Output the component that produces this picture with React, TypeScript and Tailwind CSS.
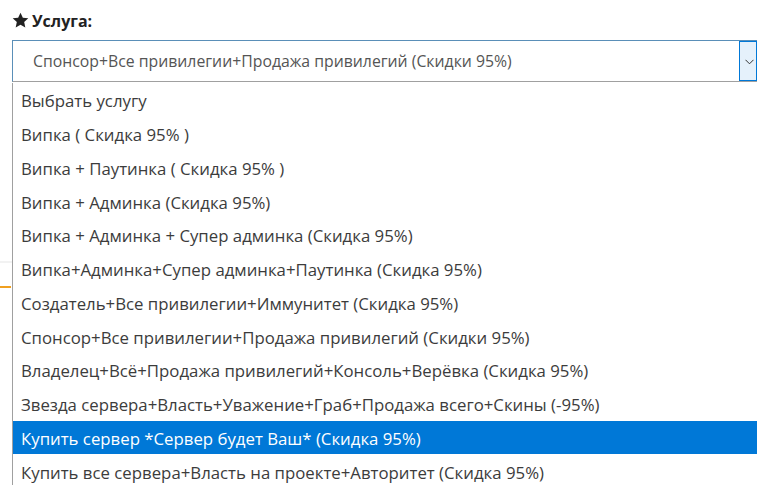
import React from "react";

const items = [
  "Выбрать услугу",
  "Випка ( Скидка 95% )",
  "Випка + Паутинка ( Скидка 95% )",
  "Випка + Админка (Скидка 95%)",
  "Випка + Админка + Супер админка (Скидка 95%)",
  "Випка+Админка+Супер админка+Паутинка (Скидка 95%)",
  "Создатель+Все привилегии+Иммунитет (Скидка 95%)",
  "Спонсор+Все привилегии+Продажа привилегий (Скидки 95%)",
  "Владелец+Всё+Продажа привилегий+Консоль+Верёвка (Скидка 95%)",
  "Звезда сервера+Власть+Уважение+Граб+Продажа всего+Скины (-95%)",
  "Купить сервер *Сервер будет Ваш* (Скидка 95%)",
  "Купить все сервера+Власть на проекте+Авторитет (Скидка 95%)",
];

export default function App() {
  return (
    <div className="w-[757px] h-[485px] overflow-hidden bg-white font-['Open_Sans',sans-serif] text-[#444] flex flex-col">
      <div className="flex items-center gap-[3px] pl-[12px] pt-[12px] h-[30px] text-[16px] font-bold text-[#222] leading-none">
        <svg width="17" height="17" viewBox="0 0 24 24" className="fill-[#222]">
          <path d="M12 1l3.3 7 7.7.9-5.8 5.3 1.6 7.6L12 17.9l-6.8 3.9 1.6-7.6L1 8.9l7.7-.9z" />
        </svg>
        <span>Услуга:</span>
      </div>
      <div className="ml-[12px] mt-[11px] h-[42px] shrink-0 flex border-t border-l border-[#5a8fb8] border-b border-b-[#a0a0a0]">
        <div className="flex-1 flex items-center pl-[20px] pt-[1px] text-[15.8px] text-[#555] whitespace-nowrap">
          Спонсор+Все привилегии+Продажа привилегий (Скидки 95%)
        </div>
        <div className="w-[18px] h-full bg-[#e5f1fb] border border-[#0078d7] flex items-center pl-[5px] pt-[2px]">
          <svg width="9" height="6" viewBox="0 0 9 6">
            <path d="M0.5 0.8 L4.5 4.8 L8.5 0.8" fill="none" stroke="#333" strokeWidth="1" />
          </svg>
        </div>
      </div>
      <div className="flex flex-1 pt-[1px]">
        <div className="w-[12px] shrink-0 flex flex-col pt-[178px] gap-[23px]">
          <div className="h-[2px] w-[12px] bg-[#f2f2f2]" />
          <div className="h-[2px] w-[11px] bg-[#f0a020]" />
        </div>
        <ul className="flex-1 bg-white border-l border-[#a0a0a0]">
          {items.map((t, i) => (
            <li
              key={i}
              className={
                i === 10
                  ? "h-[33.75px] flex items-center pl-[8px] pt-[2px] text-[16.8px] bg-[#0078d7] text-white whitespace-nowrap"
                  : "h-[33.75px] flex items-center pl-[8px] pt-[2px] text-[16.8px] text-[#3c3c3c] whitespace-nowrap"
              }
            >
              {t}
            </li>
          ))}
        </ul>
      </div>
    </div>
  );
}
